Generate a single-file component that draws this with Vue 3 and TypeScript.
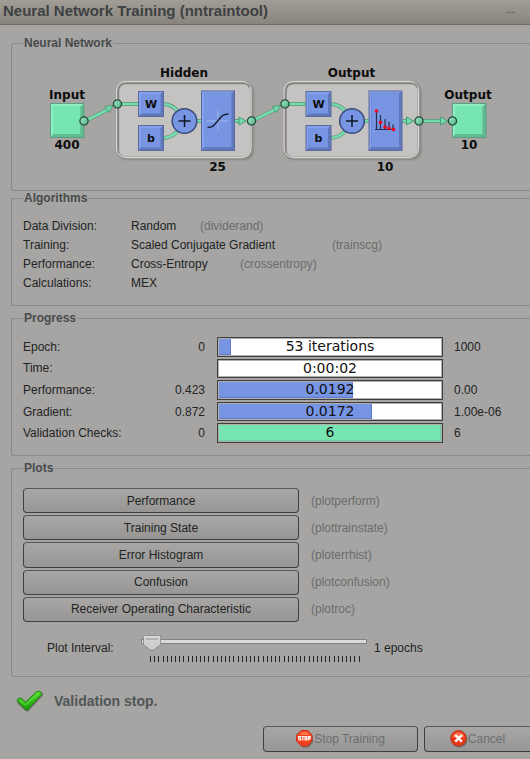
<script setup lang="ts">
import { ref } from 'vue'

interface Algorithm { label: string; name: string; fn: string; size: string }
interface Progress { label: string; start: string; text: string; end: string; percent: number; tone: string }
interface Plot { title: string; fn: string }
interface Layer { title: string; units: number; offset: number; kind: 'sigmoid' | 'softmax' }

const algorithms: Algorithm[] = [
  { label: 'Data Division:', name: 'Random', fn: '(dividerand)', size: 'short' },
  { label: 'Training:', name: 'Scaled Conjugate Gradient', fn: '(trainscg)', size: 'long' },
  { label: 'Performance:', name: 'Cross-Entropy', fn: '(crossentropy)', size: 'medium' },
  { label: 'Calculations:', name: 'MEX', fn: '', size: 'short' },
]

const progress: Progress[] = [
  { label: 'Epoch:', start: '0', text: '53 iterations', end: '1000', percent: 5.3, tone: 'blue' },
  { label: 'Time:', start: '', text: '0:00:02', end: '', percent: 0, tone: 'blue' },
  { label: 'Performance:', start: '0.423', text: '0.0192', end: '0.00', percent: 60.5, tone: 'blue' },
  { label: 'Gradient:', start: '0.872', text: '0.0172', end: '1.00e-06', percent: 69, tone: 'blue' },
  { label: 'Validation Checks:', start: '0', text: '6', end: '6', percent: 100, tone: 'green' },
]

const plots: Plot[] = [
  { title: 'Performance', fn: '(plotperform)' },
  { title: 'Training State', fn: '(plottrainstate)' },
  { title: 'Error Histogram', fn: '(ploterrhist)' },
  { title: 'Confusion', fn: '(plotconfusion)' },
  { title: 'Receiver Operating Characteristic', fn: '(plotroc)' },
]

const layers: Layer[] = [
  { title: 'Hidden', units: 25, offset: 0, kind: 'sigmoid' },
  { title: 'Output', units: 10, offset: 167.5, kind: 'softmax' },
]

const interval = ref(1)
</script>

<template>
  <div class="window">
    <header class="titlebar">
      <h1>Neural Network Training (nntraintool)</h1>
      <svg class="controls" width="25" height="12" viewBox="0 0 25 12" aria-hidden="true">
        <path d="M1 6.500h9" stroke="#77746f" stroke-width="1.500" />
        <path d="M22 11l3-5" stroke="#979590" stroke-width="2" />
      </svg>
    </header>

    <main>
      <fieldset class="network">
        <legend>Neural Network</legend>
        <svg class="diagram" width="480" height="130" viewBox="23 50 480 130" role="img" aria-label="Network diagram">
          <defs>
            <linearGradient id="ball" x1="0" y1="0" x2="1" y2="1">
              <stop offset="0" stop-color="#a2f0cc" />
              <stop offset="1" stop-color="#4fa982" />
            </linearGradient>
            <filter id="soft" x="-10%" y="-10%" width="125%" height="125%">
              <feGaussianBlur stdDeviation="1" />
            </filter>
            <g id="small-box">
              <rect width="26" height="26" fill="#5a6a9c" />
              <path d="M1 1h24l-2 2H3v20l-2 2z" fill="#86a1ec" />
              <path d="M25 1v24H1l3-3h18V4z" fill="#6079bd" />
              <rect x="3" y="3" width="19.500" height="19.500" fill="#7795e3" />
            </g>
            <g id="tall-box">
              <rect width="34" height="60.500" fill="#5a6a9c" />
              <path d="M1 1h32l-2 2H3v54l-2 2.500z" fill="#86a1ec" />
              <path d="M33 1v58.500H1l3-3h26.500V4z" fill="#6079bd" />
              <rect x="3" y="3" width="27.500" height="53.500" fill="#7795e3" />
            </g>
            <g id="green-box">
              <rect width="34.500" height="35" fill="#5f9f81" />
              <path d="M1 1h32.500l-2 2H3v29l-2 2z" fill="#90eec3" />
              <path d="M33.500 1v33H1l3-3h26.500V4z" fill="#60bb90" />
              <rect x="3" y="3" width="27.500" height="28" fill="#77e5b2" />
            </g>
            <g id="node">
              <circle r="4.100" fill="url(#ball)" stroke="#254a39" stroke-width="1.300" />
            </g>
          </defs>

          <g v-for="layer in layers" :key="layer.title" :transform="`translate(${layer.offset} 0)`">
            <rect x="118" y="83" width="136" height="77" rx="9" fill="#77757399" filter="url(#soft)" />
            <rect x="117" y="82" width="134.500" height="76" rx="9" fill="#c5c3c1" stroke="#8b8987" stroke-width="3" />
            <rect x="116.500" y="81.500" width="134.500" height="76" rx="9" fill="none" stroke="#d8d6d4" stroke-width="1.300" />
            <path d="M118.500 153V92q0-8.500 8-8.500h117q5 0 6 4" fill="none" stroke="#858381" stroke-width="1.400" />
            <g fill="none">
              <path d="M118 104h20M164 104q10 1 15 9M164 138q10-1 15-9M197 121h4M235 121h5" stroke="#5d9079" stroke-width="3.800" />
              <path d="M118 104h20M164 104q10 1 15 9M164 138q10-1 15-9M197 121h4M235 121h5" stroke="#75dcac" stroke-width="2.600" />
            </g>
            <path d="M239 117v8l7-4z" fill="#75dcac" stroke="#4c9b77" />
            <use href="#small-box" x="138" y="91" />
            <use href="#small-box" x="138" y="125" />
            <use href="#tall-box" x="201" y="90.500" />
            <circle cx="184.500" cy="121" r="12.300" fill="#7795e3" stroke="#394a7b" stroke-width="1.500" />
            <path d="M178.500 121h12M184.500 115v12" stroke="#101624" stroke-width="1.500" />
            <g v-if="layer.kind === 'sigmoid'" fill="none">
              <path d="M207 121h21M218 110.500v20" stroke="#a3b6ea" />
              <path d="M207.500 127.500c6 0 7-3 10.500-7s5-6.500 10.500-6.500" stroke="#151c30" stroke-width="1.500" />
            </g>
            <g v-else>
              <path d="M209 111v18.500M207.500 129.500h18.500M213 115v14M217.500 119v10M221.500 122v7M225.500 124.500v5" fill="none" stroke="#25304f" stroke-width="1.200" />
              <g fill="#f80018">
                <circle cx="209" cy="111" r="1.800" /><circle cx="213" cy="122.500" r="1.800" /><circle cx="217.500" cy="127" r="1.800" />
                <circle cx="221.500" cy="128.500" r="1.800" /><circle cx="226" cy="129.500" r="1.800" />
              </g>
            </g>
            <text class="glyph" x="151" y="108">W</text>
            <text class="glyph" x="151" y="142">b</text>
            <text x="184" y="77">{{ layer.title }}</text>
            <text x="217.500" y="171">{{ layer.units }}</text>
          </g>

          <use href="#green-box" x="50" y="103" />
          <use href="#green-box" x="452" y="103" />
          <g fill="none" stroke="#5d9079" stroke-width="3.800">
            <path d="M85 121l24-12M252 121l24-12M420 121h24" />
          </g>
          <g fill="none" stroke="#75dcac" stroke-width="2.600">
            <path d="M85 121l24-12M252 121l24-12M420 121h24" />
          </g>
          <g fill="#75dcac" stroke="#4c9b77">
            <path d="M105 106.500l8-1-4 7zM272.500 106.500l8-1-4 7zM440.500 117v8l7-4z" />
          </g>
          <use href="#node" x="84" y="121" />
          <use href="#node" x="117.500" y="104" />
          <use href="#node" x="251.500" y="121" />
          <use href="#node" x="285" y="104" />
          <use href="#node" x="419" y="121" />
          <use href="#node" x="452.500" y="121" />
          <text x="67" y="99">Input</text>
          <text x="67" y="149">400</text>
          <text x="468" y="99">Output</text>
          <text x="469" y="149">10</text>
        </svg>
      </fieldset>

      <fieldset class="algorithms">
        <legend>Algorithms</legend>
        <dl>
          <div v-for="a in algorithms" :key="a.label">
            <dt>{{ a.label }}</dt>
            <dd><span class="name" :class="a.size">{{ a.name }}</span><span class="fn">{{ a.fn }}</span></dd>
          </div>
        </dl>
      </fieldset>

      <fieldset class="progress">
        <legend>Progress</legend>
        <table>
          <tbody>
            <tr v-for="p in progress" :key="p.label">
              <th scope="row">{{ p.label }}</th>
              <td class="start">{{ p.start }}</td>
              <td class="bar">
                <div class="fill" :class="p.tone" :style="{ width: p.percent + '%' }"></div>
                <span>{{ p.text }}</span>
              </td>
              <td class="end">{{ p.end }}</td>
            </tr>
          </tbody>
        </table>
      </fieldset>

      <fieldset class="plots">
        <legend>Plots</legend>
        <div class="plot-list">
          <div v-for="p in plots" :key="p.title" class="plot">
            <button type="button">{{ p.title }}</button>
            <span class="fn">{{ p.fn }}</span>
          </div>
        </div>
        <div class="interval">
          <label for="interval">Plot Interval:</label>
          <div class="slider">
            <input id="interval" v-model.number="interval" type="range" min="1" max="100" />
            <div class="ticks" aria-hidden="true"><i v-for="n in 51" :key="n"></i></div>
          </div>
          <output for="interval">{{ interval }} epochs</output>
        </div>
      </fieldset>
    </main>

    <p class="status">
      <svg width="28" height="22" viewBox="0 0 28 22" aria-hidden="true">
        <defs>
          <linearGradient id="tick" x1="0" y1="0" x2="0" y2="1">
            <stop offset="0" stop-color="#4fdc28" />
            <stop offset="1" stop-color="#1a9a0c" />
          </linearGradient>
        </defs>
        <path d="M4 12.500l7 6.500L24.500 4.500" fill="none" stroke="#5d5b59" stroke-width="5" stroke-linecap="round" stroke-linejoin="round" opacity=".7" />
        <path d="M1 10.500q1-3 4-2.500l4.500 4L21 1.500q3-1 4.500 1.500v1.500L12 19.500q-1.500 1-3 0z" fill="url(#tick)" stroke="#1c8612" />
        <path d="M3.500 10l6 5L22.500 3" fill="none" stroke="#7bee55" stroke-width="1.200" opacity=".6" />
      </svg>
      Validation stop.
    </p>

    <footer>
      <button type="button" class="stop" disabled>
        <svg width="18" height="18" viewBox="0 0 18 18" aria-hidden="true">
          <path d="M6.500 2h6l4.500 4.500v6L12.500 17.500h-6L2 12.500v-6z" fill="#55535199" />
          <path d="M5.500.5h6l4.500 4.500v6L11.500 16h-6L.5 11V5z" fill="#f5401c" stroke="#c4371c" />
          <path d="M6 2h5l3 3H3z" fill="#ff7550" />
          <path d="M5 6.500H2.600v1.700h2v1.800H2.200M5.400 6.500h2.800M6.800 6.500v4M9 6.600h1.800v3.300H9zM12.500 10.500v-4h1.700v2.200h-1.700" fill="none" stroke="#fff" stroke-width="1.200" />
        </svg>
        <span>Stop Training</span>
      </button>
      <button type="button" class="cancel" disabled>
        <svg width="18" height="18" viewBox="0 0 18 18" aria-hidden="true">
          <circle cx="9.500" cy="9.500" r="8" fill="#55535199" />
          <circle cx="8.500" cy="8.300" r="7.700" fill="#e8381a" stroke="#bd3518" />
          <path d="M2.500 7a6.200 6.200 0 0 1 12 0q-6 2-12 0z" fill="#fa6e4d" />
          <path d="M5.300 5l6.600 6.600M11.900 5l-6.600 6.600" stroke="#fff" stroke-width="2.400" />
        </svg>
        <span>Cancel</span>
      </button>
    </footer>
  </div>
</template>

<style>
body {
  background: #a6a5a3;
}
</style>

<style scoped>
.window {
  font: 12px/16px "Liberation Sans", Arial, sans-serif;
  color: #222423;
  overflow: hidden;
}
.titlebar {
  display: flex;
  align-items: center;
  justify-content: space-between;
  box-sizing: border-box;
  height: 25px;
  padding-left: 3px;
  background: linear-gradient(#a29e97, #88847c);
  border-bottom: 1px solid #6f6b67;
}
h1 {
  margin: 0;
  font-size: 15px;
  line-height: 20px;
  padding-bottom: 2px;
  color: #3d4143;
}
main {
  display: flex;
  flex-direction: column;
  gap: 5px;
  padding: 11px 0 0 11px;
}
fieldset {
  min-width: 0;
  margin: 0;
  padding: 0 0 12px 11px;
  border: 1px solid #8a8987;
  border-right: 0;
  border-radius: 3px 0 0 3px;
}
legend {
  padding: 0 1px;
  font-weight: bold;
  line-height: 14px;
  color: #474b4d;
}
.network {
  margin-bottom: -5px;
  padding-bottom: 10px;
}
.diagram {
  display: block;
  max-width: 100%;
}
.diagram text {
  font: bold 12px "DejaVu Sans", sans-serif;
  text-anchor: middle;
  fill: #0c0c0c;
}
.diagram .glyph {
  font-size: 11px;
}
.algorithms {
  padding-bottom: 12px;
}
dl {
  display: grid;
  grid-auto-rows: 1fr;
  height: 77px;
  margin: 11px 0 0;
}
dl div {
  display: grid;
  grid-template-columns: 108px 1fr;
  align-items: center;
}
dd {
  display: flex;
  margin: 0;
}
.name.short { min-width: 69px; }
.name.medium { min-width: 109px; }
.name.long { min-width: 201px; }
.fn {
  color: #696d6e;
}
table {
  display: block;
  margin-top: 12px;
}
tbody {
  display: grid;
  grid-auto-rows: 1fr;
  gap: 2px;
  height: 106px;
}
tr {
  display: grid;
  grid-template-columns: 132px 50px minmax(120px, 226px) 1fr;
  align-items: center;
}
th, td {
  padding: 0;
  font-weight: normal;
  text-align: left;
}
td.start {
  text-align: right;
}
td.bar {
  position: relative;
  display: flex;
  align-self: stretch;
  margin-left: 12px;
  margin-right: -12px;
  padding: 1px;
  border: 1px solid #3f3f3f;
  background: #fff;
  box-shadow: inset 0 0 0 1px #b0afad;
}
.fill {
  box-shadow: inset -1px -1px 1px #5f7cc9;
}
.fill.blue { background: #7795e3; }
.fill.green {
  background: #77e5b2;
  box-shadow: inset -1px -1px 1px #62cf9d;
}
td.bar span {
  position: absolute;
  inset: 0;
  font: 14px/16px "DejaVu Sans", sans-serif;
  text-align: center;
  color: #111;
}
td.end {
  padding-left: 23px;
}
.plots {
  padding-bottom: 14px;
}
.plot-list {
  display: grid;
  grid-auto-rows: 1fr;
  gap: 2px;
  height: 134px;
  margin-top: 13px;
}
.plot {
  display: grid;
  grid-template-columns: 276px 1fr;
  gap: 12px;
  align-items: center;
}
button {
  align-self: stretch;
  padding: 0;
  font: inherit;
  color: inherit;
  background: linear-gradient(#a8a7a5, #979694);
  border: 1px solid #3d3f40;
  border-top-color: #555758;
  border-radius: 4px;
}
.interval {
  display: flex;
  align-items: center;
  height: 28px;
  margin: 12px 0 0 24px;
}
.interval label {
  width: 94px;
}
.slider {
  width: 226px;
  margin-right: 7px;
}
.slider input {
  display: block;
  width: 100%;
  height: 18px;
  margin: 0;
  padding: 0 2px;
  box-sizing: border-box;
  appearance: none;
  background:
    linear-gradient(#dbdad8, #dbdad8) 50% 5px / calc(100% - 2px) 3px no-repeat,
    linear-gradient(#858381, #858381) 50% 4px / 100% 5px no-repeat;
}
.slider input::-webkit-slider-thumb {
  appearance: none;
  width: 18px;
  height: 17px;
  background:
    linear-gradient(#b3b1af, #b3b1af) 50% 3px / 12px 2px no-repeat,
    linear-gradient(to top right, transparent 50%, #979593 50%, #979593 60%, #cfcecc 60%) 0 100% / 9px 7px no-repeat,
    linear-gradient(to top left, transparent 50%, #979593 50%, #979593 60%, #cfcecc 60%) 100% 100% / 9px 7px no-repeat,
    linear-gradient(#d8d7d5, #cfcecc) 50% 1px / 16px 9px no-repeat,
    linear-gradient(#979593, #979593) 0 0 / 18px 10px no-repeat;
}
.ticks {
  display: flex;
  justify-content: space-between;
  height: 6px;
  margin: 3px 7px 0 9px;
}
.ticks i {
  width: 1px;
  background: #242424;
}
.status {
  display: flex;
  align-items: center;
  gap: 10px;
  margin: 13px 0 14px 16px;
  font-size: 14px;
  font-weight: bold;
  color: #505557;
}
footer {
  display: flex;
  justify-content: flex-end;
  gap: 6px;
  padding-bottom: 7px;
}
footer button {
  display: flex;
  align-items: center;
  justify-content: center;
  height: 26px;
  color: #6c6f70;
}
.stop {
  width: 155px;
}
.cancel {
  width: 106px;
  border-right: 0;
  border-radius: 4px 0 0 4px;
}
</style>
